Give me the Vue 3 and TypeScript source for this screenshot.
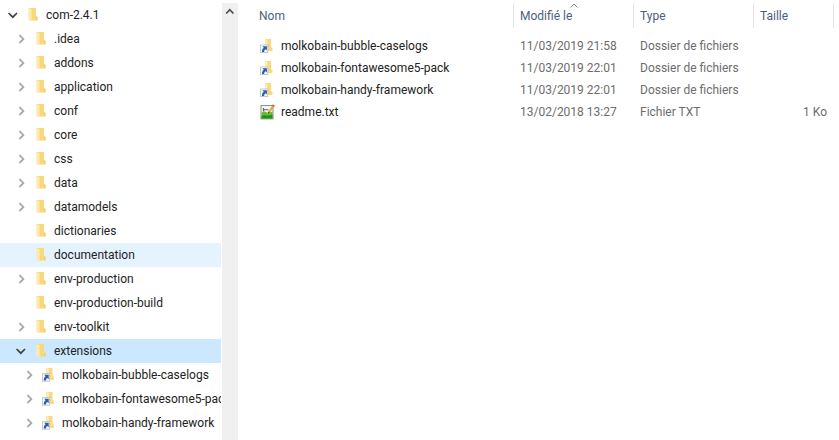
<script setup lang="ts">
import { ref } from 'vue'

interface TreeNode {
  name: string
  level: number
  state: 'open' | 'closed' | 'leaf'
  link?: boolean
}

interface FileRow {
  name: string
  modified: string
  type: string
  size: string
  text?: boolean
}

const nodes: TreeNode[] = [
  { name: 'com-2.4.1', level: 0, state: 'open' },
  { name: '.idea', level: 1, state: 'closed' },
  { name: 'addons', level: 1, state: 'closed' },
  { name: 'application', level: 1, state: 'closed' },
  { name: 'conf', level: 1, state: 'closed' },
  { name: 'core', level: 1, state: 'closed' },
  { name: 'css', level: 1, state: 'closed' },
  { name: 'data', level: 1, state: 'closed' },
  { name: 'datamodels', level: 1, state: 'closed' },
  { name: 'dictionaries', level: 1, state: 'leaf' },
  { name: 'documentation', level: 1, state: 'leaf' },
  { name: 'env-production', level: 1, state: 'closed' },
  { name: 'env-production-build', level: 1, state: 'leaf' },
  { name: 'env-toolkit', level: 1, state: 'closed' },
  { name: 'extensions', level: 1, state: 'open' },
  { name: 'molkobain-bubble-caselogs', level: 2, state: 'closed', link: true },
  { name: 'molkobain-fontawesome5-pack', level: 2, state: 'closed', link: true },
  { name: 'molkobain-handy-framework', level: 2, state: 'closed', link: true },
]

const files: FileRow[] = [
  { name: 'molkobain-bubble-caselogs', modified: '11/03/2019 21:58', type: 'Dossier de fichiers', size: '' },
  { name: 'molkobain-fontawesome5-pack', modified: '11/03/2019 22:01', type: 'Dossier de fichiers', size: '' },
  { name: 'molkobain-handy-framework', modified: '11/03/2019 22:01', type: 'Dossier de fichiers', size: '' },
  { name: 'readme.txt', modified: '13/02/2018 13:27', type: 'Fichier TXT', size: '1 Ko', text: true },
]

const selected = ref('extensions')
const hovered = ref('documentation')
</script>

<template>
  <div class="explorer">
    <nav class="sidebar">
      <ul class="tree">
        <li
          v-for="node in nodes"
          :key="node.name"
          class="node"
          :class="[`level-${node.level}`, { selected: node.name === selected, hovered: node.name === hovered }]"
          @mouseenter="hovered = node.name"
        >
          <button v-if="node.state !== 'leaf'" class="toggle" type="button" :aria-label="node.name" :aria-expanded="node.state === 'open'">
            <svg v-if="node.state === 'open'" class="chevron open" viewBox="0 0 16 16"><path d="M4.6 6 L8.8 10.2 L13 6" /></svg>
            <svg v-else class="chevron" viewBox="0 0 16 16"><path d="M7.4 4.2 L11.4 8.2 L7.4 12.2" /></svg>
          </button>
          <span v-else class="toggle"></span>
          <svg class="icon" viewBox="0 0 16 16">
            <template v-if="node.link">
              <path d="M4.5 1 H10.5 V9.5 H11.8 V13 H4.5 Z" fill="#f8da7c" />
              <path d="M4.5 1 L7 1.8 V13 H4.5 Z" fill="#fdeab0" />
              <rect x="0.4" y="6.6" width="7.2" height="7.6" fill="#f5f8fb" stroke="#b4bdc6" stroke-width="0.8" />
              <path d="M2.2 7.8 H6.7 V12.2 L5.4 10.9 C4.3 11.6 4 12.3 4 13.5 H1.8 C1.7 11.5 2.3 10.2 3.6 9.3 Z" fill="#2c5fa4" />
            </template>
            <template v-else>
              <path d="M3 1 H10 V9.5 H11.4 V13.5 H3 Z" fill="#f8d878" />
              <path d="M10 9.5 H11.4 V13.5 H10 Z" fill="#f3cf68" />
              <path d="M2.3 1 L5.6 2.2 V14 L2.3 13 Z" fill="#fdeab0" />
            </template>
          </svg>
          <button class="label" type="button" @click="selected = node.name">{{ node.name }}</button>
        </li>
      </ul>
      <div class="scrollbar">
        <button class="scroll-up" type="button" aria-label="Haut">
          <svg viewBox="0 0 16 16"><path d="M4.2 10.5 L7.8 6.7 L11.4 10.5" /></svg>
        </button>
      </div>
    </nav>

    <main class="content">
      <table class="files">
        <colgroup>
          <col />
          <col class="col-wide" />
          <col class="col-wide" />
          <col class="col-size" />
          <col class="col-rest" />
        </colgroup>
        <thead>
          <tr>
            <th scope="col">Nom</th>
            <th scope="col" aria-sort="ascending">
              Modifié le
              <svg class="sort" viewBox="0 0 8 5"><path d="M0.5 4.5 L4 1 L7.5 4.5" /></svg>
            </th>
            <th scope="col">Type</th>
            <th scope="col">Taille</th>
            <td></td>
          </tr>
        </thead>
        <tbody>
          <tr v-for="file in files" :key="file.name">
            <td>
              <span class="file">
                <svg v-if="file.text" class="icon" viewBox="0 0 16 16">
                  <rect x="2" y="1.5" width="12" height="13.4" fill="#f4f7f2" stroke="#7d8781" stroke-width="0.9" />
                  <path d="M2.5 8.5 L5.5 7.5 L9.5 9 L13.5 7.5 V14.4 H2.5 Z" fill="#5fbf30" />
                  <path d="M2.5 12 C5.5 10 9.5 13 13.5 10.5 V14.4 H2.5 Z" fill="#278c18" />
                  <path d="M4.5 4 V7.6 M4.5 5.8 H9.5" stroke="#5b645e" stroke-width="1.1" fill="none" />
                  <path d="M13.8 0.6 L15.8 1.8 L11 8.6 L9.1 9.6 L9.3 7.6 Z" fill="#e0a848" />
                  <path d="M13.8 0.6 L15.8 1.8 L15 3 L13 1.8 Z" fill="#c76050" />
                  <path d="M9.3 7.6 L11 8.6 L9.1 9.6 Z" fill="#4a3c25" />
                </svg>
                <svg v-else class="icon" viewBox="0 0 16 16">
                  <path d="M6 1 H12 V9.5 H13.4 V13 H6 Z" fill="#f8da7c" />
                  <path d="M6 1 L8.5 1.8 V13 H6 Z" fill="#fdeab0" />
                  <rect x="1.6" y="7" width="7.2" height="7.6" fill="#f5f8fb" stroke="#b4bdc6" stroke-width="0.8" />
                  <path d="M3.4 8.2 H7.9 V12.6 L6.6 11.3 C5.5 12 5.2 12.7 5.2 13.9 H3 C2.9 11.9 3.5 10.6 4.8 9.7 Z" fill="#2c5fa4" />
                </svg>
                {{ file.name }}
              </span>
            </td>
            <td>{{ file.modified }}</td>
            <td>{{ file.type }}</td>
            <td class="size">{{ file.size }}</td>
            <td></td>
          </tr>
        </tbody>
      </table>
    </main>
  </div>
</template>

<style>
body {
  background: #fff;
}
</style>

<style scoped>
.explorer {
  display: flex;
  height: 100vh;
  overflow: hidden;
  font-family: Roboto, "Open Sans", sans-serif;
  font-size: 12px;
  line-height: 16px;
  color: #222;
}

button {
  padding: 0;
  border: 0;
  background: none;
  font: inherit;
  color: inherit;
}

.sidebar {
  display: flex;
  flex: 0 0 238px;
  min-width: 0;
  box-sizing: border-box;
  padding-top: 3px;
}

.tree {
  flex: 1;
  min-width: 0;
  margin: 0 1px 0 0;
  padding: 0;
  list-style: none;
  overflow: hidden;
}

.node {
  display: flex;
  align-items: center;
  height: 24px;
  padding-left: 4px;
}

.level-1 {
  padding-left: 12px;
}

.level-2 {
  padding-left: 20px;
}

.hovered {
  background: #e5f3ff;
}

.selected {
  background: #cce8ff;
}

.toggle {
  flex: none;
  width: 16px;
  height: 16px;
  margin-right: 6px;
}

.icon {
  flex: none;
  display: block;
  width: 16px;
  height: 16px;
}

.chevron {
  display: block;
  width: 16px;
  height: 16px;
  fill: none;
  stroke: #a6a6a6;
  stroke-width: 1.7;
}

.chevron.open {
  stroke: #404040;
}

.label {
  margin-left: 4px;
  white-space: nowrap;
}

.scrollbar {
  flex: none;
  width: 16px;
  background: #f0f0f0;
}

.scroll-up,
.scroll-up svg {
  display: block;
  width: 16px;
  height: 16px;
}

.scroll-up path {
  fill: none;
  stroke: #505050;
  stroke-width: 1.8;
}

.content {
  flex: 1;
  min-width: 0;
  padding-top: 3px;
}

.files {
  width: 100%;
  table-layout: fixed;
  border-collapse: separate;
  border-spacing: 0;
  color: #6d6d6d;
}

.col-wide {
  width: 120px;
}

.col-size {
  width: 80px;
}

.col-rest {
  width: 5px;
}

th,
td {
  padding: 0 7px 0 6px;
  text-align: left;
  font-weight: 400;
  white-space: nowrap;
}

th {
  position: relative;
  height: 25px;
  border-right: 1px solid #e5e5e5;
  color: #4c607a;
}

thead td {
  padding: 0;
}

th:first-child {
  padding-left: 21px;
}

tbody::before {
  content: "";
  display: block;
  height: 7px;
}

tbody td {
  height: 22px;
}

tbody td:first-child {
  padding-left: 21px;
  color: #222;
}

tbody td:last-child {
  padding: 0;
}

.file {
  display: flex;
  align-items: center;
  gap: 6px;
}

.sort {
  position: absolute;
  top: 0;
  left: 50%;
  width: 8px;
  height: 5px;
  margin-left: -4px;
  fill: none;
  stroke: #808080;
  stroke-width: 1;
}

.size {
  text-align: right;
}
</style>
